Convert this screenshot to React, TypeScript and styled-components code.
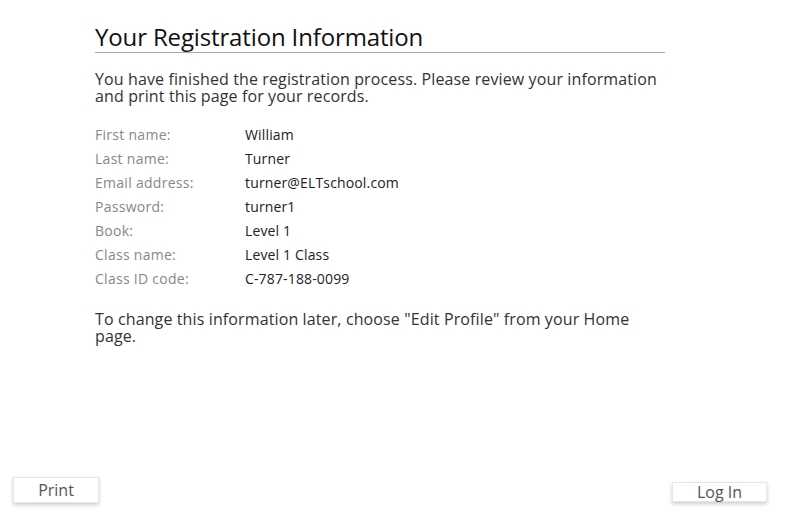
import React from "react";
import styled, { createGlobalStyle } from "styled-components";

const Global = createGlobalStyle`
  html, body { margin: 0; padding: 0; background: #fff; }
  body { font-family: "Open Sans", "Liberation Sans", sans-serif; }
`;

const Page = styled.div`
  width: 800px;
  height: 520px;
  display: flex;
  flex-direction: column;
  justify-content: space-between;
  box-sizing: border-box;
`;

const Content = styled.main`
  width: 570px;
  margin-left: 95px;
  padding-top: 21px;
`;

const Title = styled.h1`
  margin: 0;
  font-size: 24px;
  font-weight: 400;
  line-height: 31px;
  letter-spacing: -0.14px;
  color: #111;
  border-bottom: 1px solid #aaa;
`;

const Para = styled.p<{ $top: number }>`
  margin: ${(p) => p.$top}px 0 0 0;
  font-size: 16px;
  line-height: 17px;
  letter-spacing: 0.12px;
  color: #333;
`;

const Table = styled.div`
  display: grid;
  grid-template-columns: 150px 1fr;
  grid-auto-rows: 24px;
  margin-top: 17px;
  font-size: 14px;
  align-items: center;
`;

const Label = styled.div`
  color: #888;
  letter-spacing: 0.28px;
`;

const Value = styled.div`
  color: #222;
  letter-spacing: 0.15px;
`;

const Footer = styled.footer`
  display: flex;
  justify-content: space-between;
  align-items: flex-end;
  padding: 0 33px 17px 13px;
`;

const Button = styled.button<{ $w: number; $h: number; $lift?: number }>`
  width: ${(p) => p.$w}px;
  height: ${(p) => p.$h}px;
  margin-bottom: ${(p) => p.$lift ?? 0}px;
  border: 1px solid #e6e6e6;
  background: #fff;
  box-shadow: 0 2px 4px rgba(0, 0, 0, 0.2);
  font-family: "Open Sans", "Liberation Sans", sans-serif;
  font-size: 16px;
  color: #555;
  padding: 0;
  display: flex;
  align-items: center;
  justify-content: center;
`;

const rows: [string, string][] = [
  ["First name:", "William"],
  ["Last name:", "Turner"],
  ["Email address:", "turner@ELTschool.com"],
  ["Password:", "turner1"],
  ["Book:", "Level 1"],
  ["Class name:", "Level 1 Class"],
  ["Class ID code:", "C-787-188-0099"],
];

export default function App() {
  return (
    <Page>
      <Global />
      <Content>
        <Title>Your Registration Information</Title>
        <Para $top={18}>
          You have finished the registration process. Please review your information
          and print this page for your records.
        </Para>
        <Table>
          {rows.map(([l, v]) => (
            <React.Fragment key={l}>
              <Label>{l}</Label>
              <Value>{v}</Value>
            </React.Fragment>
          ))}
        </Table>
        <Para $top={21}>
          To change this information later, choose "Edit Profile" from your Home page.
        </Para>
      </Content>
      <Footer>
        <Button $w={86} $h={26}>Print</Button>
        <Button $w={95} $h={20} $lift={1}>Log In</Button>
      </Footer>
    </Page>
  );
}
